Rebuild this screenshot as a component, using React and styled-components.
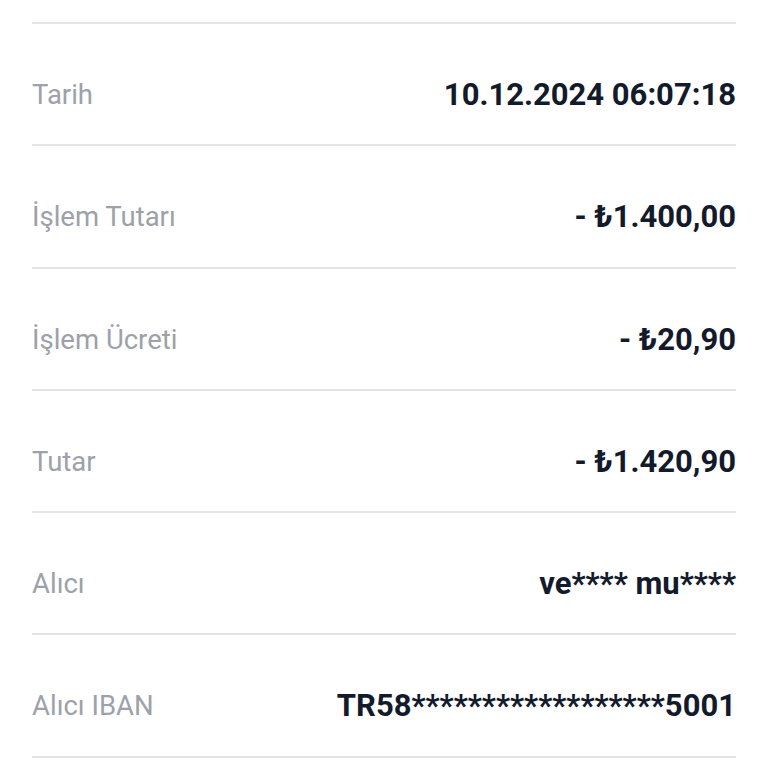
import styled, { createGlobalStyle } from "styled-components";

const GlobalStyle = createGlobalStyle`
  body {
    margin: 0;
    background: #fff;
    font-family: Roboto, "Noto Sans", sans-serif;
  }
`;

const details = [
  { label: "Tarih", value: "10.12.2024 06:07:18" },
  { label: "İşlem Tutarı", value: "- ₺1.400,00" },
  { label: "İşlem Ücreti", value: "- ₺20,90" },
  { label: "Tutar", value: "- ₺1.420,90" },
  { label: "Alıcı", value: "ve**** mu****" },
  { label: "Alıcı IBAN", value: "TR58******************5001" },
];

export default function App() {
  return (
    <>
      <GlobalStyle />
      <Page>
        <List>
          {details.map((item) => (
            <Row key={item.label}>
              <Label>{item.label}</Label>
              <Value>{item.value}</Value>
            </Row>
          ))}
        </List>
      </Page>
    </>
  );
}

const Page = styled.div`
  width: 768px;
  height: 768px;
  overflow: hidden;
  padding: 22px 32px 0;
  box-sizing: border-box;
  background: #fff;
`;

const List = styled.div`
  display: flex;
  flex-direction: column;
  border-bottom: 2px solid #e3e4e7;
`;

const Row = styled.div`
  display: flex;
  align-items: center;
  justify-content: space-between;
  border-top: 2px solid #e3e4e7;
  padding: 55px 0 33.3px;
  line-height: 32px;
`;

const Label = styled.span`
  font-size: 27.5px;
  color: #9da1a9;
`;

const Value = styled.span`
  font-size: 31px;
  font-weight: 700;
  color: #131a2c;
`;
